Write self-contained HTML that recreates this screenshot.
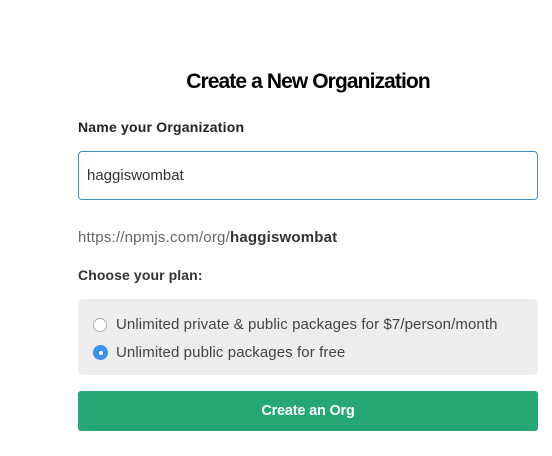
<!DOCTYPE html>
<html><head><style>
body{margin:0;width:552px;height:456px;background:#fff;font-family:"Liberation Sans",sans-serif;position:relative;overflow:hidden}
.a{position:absolute;white-space:nowrap}
</style></head><body>
<div class="a" style="left:78px;width:460px;top:70px;text-align:center;font-size:21px;font-weight:bold;letter-spacing:-0.9px;color:#000">Create a New Organization</div>
<div class="a" style="left:78px;top:119px;font-size:14px;font-weight:bold;color:#222;letter-spacing:0.2px">Name your Organization</div>
<div class="a" style="left:78px;top:151px;width:460px;height:49px;border:1px solid #3d8fcc;border-radius:4px;box-sizing:border-box"></div>
<div class="a" style="left:87px;top:167px;font-size:15px;color:#333;letter-spacing:0px">haggiswombat</div>
<div class="a" style="left:78px;top:229px;font-size:15px;color:#666;letter-spacing:0.2px">https://npmjs.com/org/<b style="color:#333">haggiswombat</b></div>
<div class="a" style="left:78px;top:267px;font-size:14px;font-weight:bold;color:#333;letter-spacing:0.1px">Choose your plan:</div>
<div class="a" style="left:78px;top:299px;width:460px;height:76px;background:#ededed;border-radius:5px"></div>
<div class="a" style="left:93px;top:318px;width:14px;height:14px;border:1px solid #aaa;border-radius:50%;background:#fff;box-sizing:border-box"></div>
<div class="a" style="left:116px;top:316px;font-size:15px;color:#444;letter-spacing:0.1px">Unlimited private &amp; public packages for $7/person/month</div>
<div class="a" style="left:93px;top:345px;width:15px;height:15px;border-radius:50%;background:#3b8fef;box-sizing:border-box"></div>
<div class="a" style="left:98.5px;top:350.5px;width:4px;height:4px;border-radius:50%;background:#fff"></div>
<div class="a" style="left:116px;top:344px;font-size:15px;color:#444;letter-spacing:0.1px">Unlimited public packages for free</div>
<div class="a" style="left:78px;top:391px;width:460px;height:40px;background:#26a874;border-radius:3px;color:#fff;font-weight:bold;font-size:14.5px;text-align:center;line-height:40px;letter-spacing:-0.2px">Create an Org</div>
</body></html>
